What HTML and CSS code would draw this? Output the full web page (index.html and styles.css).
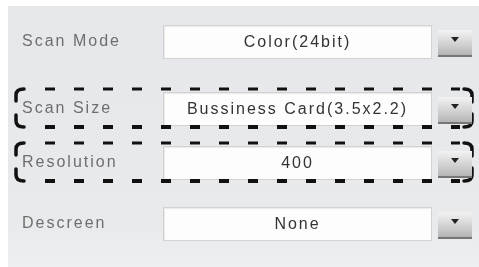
FILE: index.html
```html
<!DOCTYPE html>
<html>
<head>
<meta charset="utf-8">
<link rel="stylesheet" href="styles.css">
</head>
<body>
<div class="panel">
  <div class="row row-mode">
    <span class="label">Scan Mode</span>
    <div class="field">Color(24bit)</div>
    <span class="drop"></span>
  </div>
  <div class="row row-size">
    <svg class="frame" width="460" height="44" viewBox="0 0 460 44">
      <line class="dash-top" x1="31" y1="3" x2="446" y2="3"/>
      <line class="dash-bot" x1="31" y1="41" x2="446" y2="41"/>
      <path class="bracket" d="M10 3 Q2 3 2 9 L2 15 M2 29 L2 35 Q2 41 10 41 M450 3 Q458 3 458 9 L458 16 M458 28 L458 35 Q458 41 450 41"/>
    </svg>
    <span class="label">Scan Size</span>
    <div class="field">Bussiness Card(3.5x2.2)</div>
    <span class="drop"></span>
  </div>
  <div class="row row-res">
    <svg class="frame" width="460" height="44" viewBox="0 0 460 44">
      <line class="dash-top" x1="31" y1="3" x2="446" y2="3"/>
      <line class="dash-bot" x1="31" y1="41" x2="446" y2="41"/>
      <path class="bracket" d="M10 3 Q2 3 2 9 L2 15 M2 29 L2 35 Q2 41 10 41 M450 3 Q458 3 458 9 L458 16 M458 28 L458 35 Q458 41 450 41"/>
    </svg>
    <span class="label">Resolution</span>
    <div class="field">400</div>
    <span class="drop"></span>
  </div>
  <div class="row row-desc">
    <span class="label">Descreen</span>
    <div class="field">None</div>
    <span class="drop"></span>
  </div>
</div>
</body>
</html>
```

FILE: styles.css
```css
html, body {
  margin: 0;
  padding: 0;
  background: #ffffff;
}
body {
  width: 479px;
  height: 267px;
  overflow: hidden;
}
.panel {
  margin: 6px 0 0 8px;
  height: 261px;
  box-sizing: border-box;
  padding: 19px 6px 0 14px;
  background: linear-gradient(#e6e7ea, #e9eaec 85%, #eeeff0);
  display: flex;
  flex-direction: column;
  font-family: "Liberation Sans", Arial, sans-serif;
  font-size: 16px;
  letter-spacing: 2px;
}
.row {
  position: relative;
  display: flex;
  align-items: center;
  height: 34px;
  filter: blur(0.5px);
}
.row-size { margin-top: 33px; }
.row-res { margin-top: 20px; }
.row-desc { margin-top: 27px; }
.label {
  width: 141px;
  color: #6e6e6e;
  margin-top: -3px;
}
.field {
  width: 269px;
  height: 34px;
  box-sizing: border-box;
  border: 1px solid #d2d2d2;
  background: #fdfdfd;
  box-shadow: inset 1px 1px 1px rgba(0, 0, 0, 0.08);
  display: flex;
  align-items: center;
  justify-content: center;
  color: #333333;
}
.drop {
  position: relative;
  align-self: flex-end;
  margin: 0 0 2px 6px;
  width: 34px;
  height: 27px;
  box-sizing: border-box;
  background: linear-gradient(#f3f3f3, #c9c9c9 70%, #b4b4b4);
  border-bottom: 2px solid #767676;
}
.drop::before {
  content: "";
  position: absolute;
  left: 50%;
  top: 7px;
  transform: translateX(-50%);
  border-left: 4px solid transparent;
  border-right: 4px solid transparent;
  border-top: 5px solid #222222;
}
.frame {
  position: absolute;
  left: -8px;
  top: -6px;
  overflow: visible;
  pointer-events: none;
}
.dash-top {
  stroke: #111111;
  stroke-width: 3;
  stroke-dasharray: 10 19;
}
.dash-bot {
  stroke: #111111;
  stroke-width: 4;
  stroke-dasharray: 10 19;
}
.bracket {
  fill: none;
  stroke: #111111;
  stroke-width: 3.5;
  stroke-linecap: round;
}
```
